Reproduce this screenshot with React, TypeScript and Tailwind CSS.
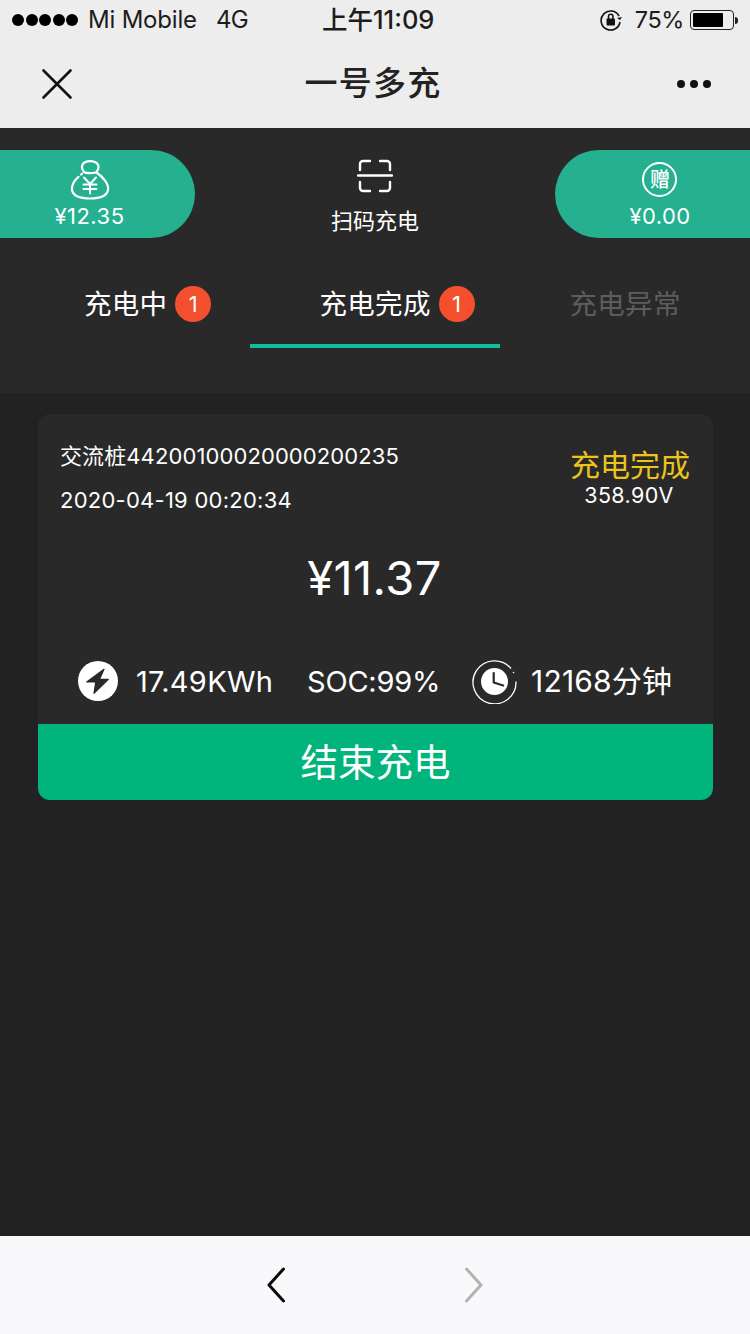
import React from 'react';

const font = { fontFamily: 'Inter, "Noto Sans CJK SC", sans-serif' };

const Badge = () => (
  <span className="ml-[8px] flex h-[36px] w-[36px] items-center justify-center rounded-full bg-[#f4502f] text-[22px] leading-none text-white">1</span>
);

const StatusBar = () => (
  <div className="flex h-[40px] items-center pl-[12px] pr-[12px] text-[24px] leading-none text-[#1c1c1c]">
    <div className="flex w-[68px] gap-[1.5px]">
      {[0, 1, 2, 3, 4].map(i => <span key={i} className="h-[12px] w-[12px] rounded-full bg-black" />)}
    </div>
    <span className="ml-[8px] w-[129px] text-[24px] tracking-[-0.2px]">Mi Mobile</span>
    <span className="w-[105px] -translate-x-px tracking-[-0.8px]">4G</span>
    <span className="text-[25.5px] font-medium">上午11:09</span>
    <div className="ml-auto flex items-center">
      <svg width="24" height="24" viewBox="0 0 24 24" fill="none" stroke="#111" strokeWidth="1.6">
        <path d="M20 8A9.5 9.5 0 1 0 21 14" />
        <path d="M18 10l3 2 2-3" fill="#111" stroke="none" />
        <rect x="7.5" y="10.5" width="8.5" height="7" rx="1" fill="#111" stroke="none" />
        <path d="M9.5 11V8.5a2.2 2.2 0 0 1 4.4 0V11" />
      </svg>
      <span className="ml-[12px] text-[23.5px] tracking-[-0.4px]">75%</span>
      <div className="ml-[6px] flex h-[20px] w-[44px] rounded-[4px] border border-[#222] p-[2px]">
        <div className="h-full w-[30px] rounded-[1px] bg-black" />
      </div>
      <div className="ml-[1px] h-[7px] w-[3px] rounded-r bg-[#222]" />
    </div>
  </div>
);

const NavBar = () => (
  <div className="flex h-[88px] items-center justify-between pb-[1px] pl-[42px] pr-[39px]">
    <svg width="30" height="30" viewBox="0 0 30 30" stroke="#111" strokeWidth="2.6" fill="none" strokeLinecap="round">
      <path d="M1.5 1.5l27 27M28.5 1.5l-27 27" />
    </svg>
    <span className="mr-[3px] text-[33px] font-medium tracking-[1.2px] text-[#222]">一号多充</span>
    <div className="flex gap-[5px]">
      {[0, 1, 2].map(i => <span key={i} className="h-[8px] w-[8px] rounded-full bg-[#111]" />)}
    </div>
  </div>
);

const MoneyBag = () => (
  <svg width="40" height="40" viewBox="0 0 40 40" fill="none" stroke="white" strokeWidth="2.2" strokeLinecap="round" strokeLinejoin="round">
    <path d="M14 12C9.500 6 13 1.200 20 1.200 27.500 1.200 31 6 26.500 12 25 13.500 16 13.500 14 12z" />
    <path d="M26.500 12.500C33 17 39 24 38 30 37 36 30 38.500 20 38.500 10 38.500 3 36 2 30 1.500 25.500 4.500 20.500 8.500 16.800" />
    <path d="M11 14.600l1-.9" />
    <path d="M14 17.500l6 6.500 6-6.500M13.500 24.500h13M13.500 29h13M20 24v9.500" strokeWidth="2" />
  </svg>
);

const ScanIcon = () => (
  <svg width="36" height="34" viewBox="0 0 36 34" fill="none" stroke="white" strokeWidth="2.4" strokeLinecap="round">
    <path d="M3 11V5a3 3 0 0 1 3-3h7M23 2h7a3 3 0 0 1 3 3v6M3 23v6a3 3 0 0 0 3 3h7M23 32h7a3 3 0 0 0 3-3v-6" />
    <path d="M1 16.500h34" />
  </svg>
);

const Wallet = () => (
  <div className="flex h-[88px] w-[195px] flex-col items-center rounded-r-[44px] bg-[#25b090] pt-[10px] text-[22px] leading-none text-white">
    <div className="mr-[16px]"><MoneyBag /></div>
    <span className="mr-[16px] mt-[5px] tracking-[0.5px]">¥12.35</span>
  </div>
);

const Gift = () => (
  <div className="flex h-[88px] w-[195px] flex-col items-center rounded-l-[44px] bg-[#25b090] pl-[15px] pt-[12px] text-[22px] leading-none text-white">
    <span className="flex h-[35px] w-[35px] items-center justify-center rounded-full border-2 border-white text-[20px] font-medium">赠</span>
    <span className="mt-[8px] tracking-[0.4px]">¥0.00</span>
  </div>
);

const Header = () => (
  <div className="h-[265px] bg-[#292929]">
    <div className="flex items-start justify-between pt-[22px]">
      <Wallet />
      <div className="flex flex-col items-center pt-[9px] text-white">
        <ScanIcon />
        <span className="mt-[12px] text-[22px] leading-[32px]">扫码充电</span>
      </div>
      <Gift />
    </div>
    <div className="mt-[38px] grid grid-cols-3 text-[27.5px] leading-none tracking-[0.3px]">
      <div className="flex h-[72px] items-start pl-[84px] pt-[10px] text-white">
        <span className="mt-[5px]">充电中</span><Badge />
      </div>
      <div className="flex h-[72px] items-start border-b-4 border-[#13bc9b] pl-[69.5px] pt-[10px] text-white">
        <span className="mt-[5px]">充电完成</span><Badge />
      </div>
      <div className="flex h-[72px] items-start pl-[69.5px] pt-[15px] text-[#5d5d5d]">充电异常</div>
    </div>
  </div>
);

const BoltIcon = () => (
  <svg width="40" height="40" viewBox="0 0 40 40">
    <circle cx="20" cy="20" r="20" fill="white" />
    <path d="M26 8.300L8.700 21H17.700L16 32.300 30.300 18.300H21.500z" fill="#292929" stroke="#292929" strokeWidth="1.200" strokeLinejoin="round" />
  </svg>
);

const ClockIcon = () => (
  <svg width="45" height="45" viewBox="0 0 45 45" fill="none">
    <path d="M39 9.500A21.500 21.500 0 1 0 44 22.500" stroke="white" strokeWidth="1.300" />
    <circle cx="41.500" cy="13.500" r="0.800" fill="white" />
    <circle cx="22.500" cy="22.500" r="13.500" fill="white" />
    <path d="M21.700 14v9.500l9.500 3" stroke="#292929" strokeWidth="2.200" strokeLinecap="round" strokeLinejoin="round" />
  </svg>
);

const ChargeCard = () => (
  <div className="ml-[38px] mr-[37px] mt-[21px] h-[386px] overflow-hidden rounded-[12px] bg-[#292929] text-white">
    <div className="flex justify-between pl-[22px] pr-[23px] pt-[20px]">
      <div className="text-[22px] leading-[44px]">
        <div className="tracking-[0.1px]">交流桩44200100020000200235</div>
        <div className="tracking-[0.25px]">2020-04-19 00:20:34</div>
      </div>
      <div className="flex flex-col items-center pt-[15px]">
        <span className="text-[30px] leading-[33px] text-[#eec41a]">充电完成</span>
        <span className="-translate-x-px text-[21.5px] leading-[26px] tracking-[0.4px]">358.90V</span>
      </div>
    </div>
    <div className="mt-[26px] pr-[2px] text-center text-[47px] leading-[60px] tracking-[0.4px]">¥11.37</div>
    <div className="mt-[50px] flex h-[46px] items-center pl-[40px] text-[29px] leading-none">
      <BoltIcon />
      <span className="ml-[18px] w-[171px] tracking-[0.3px]">17.49KWh</span>
      <span className="w-[165px] tracking-[-0.2px]">SOC:99%</span>
      <ClockIcon />
      <span className="ml-[14px] text-[30px] tracking-[0.2px]">12168分钟</span>
    </div>
    <div className="mt-[20px] flex h-[76px] items-center justify-center bg-[#00b47b] pt-[2px] text-[37.5px] leading-none">结束充电</div>
  </div>
);

const BottomBar = () => (
  <div className="flex h-[98px] items-center justify-center gap-[180px] bg-[#f9f9fb]">
    <svg width="18" height="36" viewBox="0 0 18 36" fill="none" stroke="#0a0a0a" strokeWidth="3" strokeLinecap="round" strokeLinejoin="round">
      <path d="M16.500 2L2 18l14.500 16" />
    </svg>
    <svg width="18" height="36" viewBox="0 0 18 36" fill="none" stroke="#b3b3b3" strokeWidth="3" strokeLinecap="round" strokeLinejoin="round">
      <path d="M1.500 2L16 18 1.500 34" />
    </svg>
  </div>
);

export default function App() {
  return (
    <div className="flex h-[1334px] w-[750px] flex-col overflow-hidden bg-[#222222]" style={font}>
      <div className="h-[128px] bg-[#ededed]">
        <StatusBar />
        <NavBar />
      </div>
      <Header />
      <div className="flex-1">
        <ChargeCard />
      </div>
      <BottomBar />
    </div>
  );
}
